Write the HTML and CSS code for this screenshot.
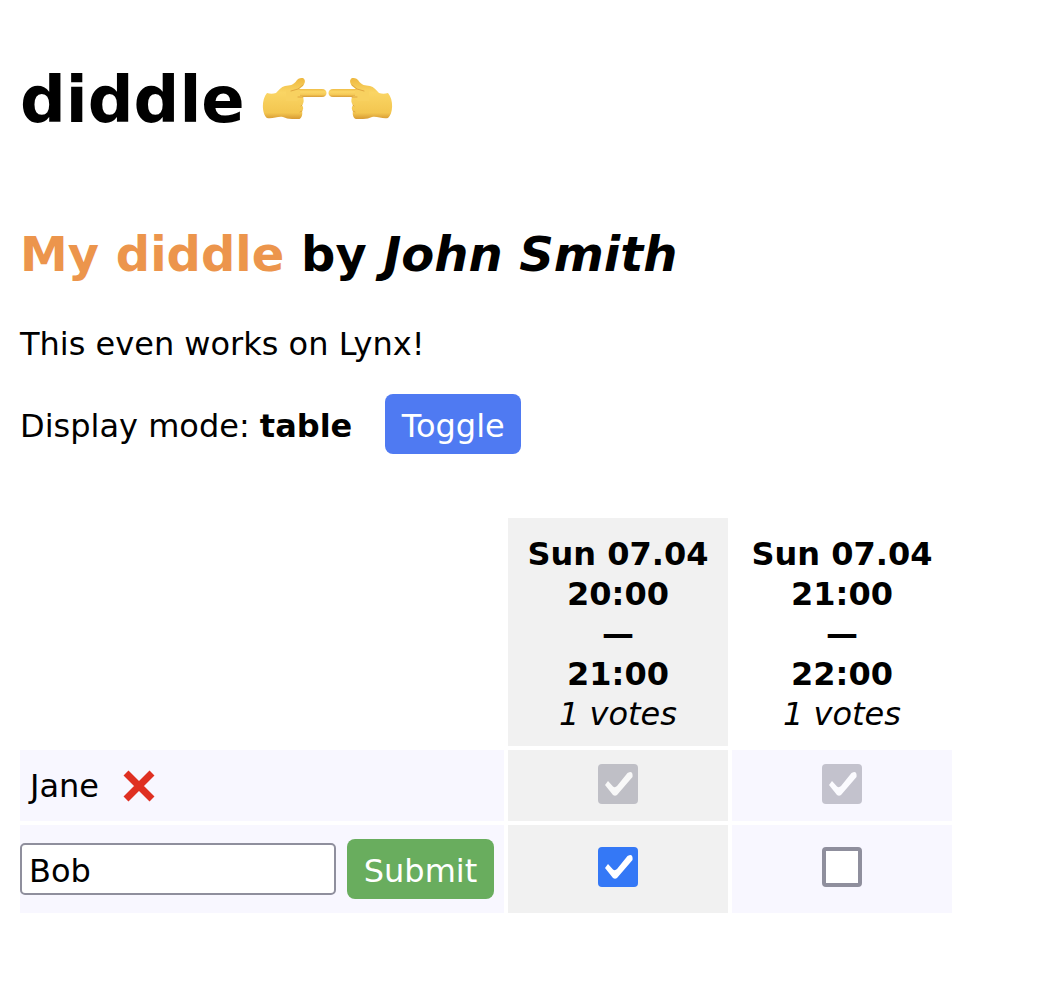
FILE: index.html
```
<!DOCTYPE html>
<html lang="en">
<head>
<meta charset="utf-8">
<title>diddle</title>
<link rel="stylesheet" href="styles.css">
</head>
<body>
<header class="site-header">
<h1 class="brand">diddle
<svg class="hands" viewBox="0 0 132 44" aria-hidden="true">
<defs>
<linearGradient id="skin" x1="0" y1="0" x2="0" y2="1"><stop offset="0" stop-color="#eeb840"/><stop offset=".35" stop-color="#fad564"/><stop offset=".85" stop-color="#f3c650"/><stop offset="1" stop-color="#d79a33"/></linearGradient>
<linearGradient id="finger" x1="0" y1="0" x2="0" y2="1"><stop offset="0" stop-color="#efbd48"/><stop offset=".35" stop-color="#fbd766"/><stop offset=".7" stop-color="#f5c957"/><stop offset="1" stop-color="#d79c38"/></linearGradient>
<g id="hand">
<path fill="url(#skin)" d="M5 15C8 16 11 16 14 15C17 12 19 9 23 8C28 7 31 8 35 2C37 0 39 0 41 0C44 2 43 5 41 8L36 12L41 19C42 22 42 25 40 27C42 30 41 32 40 33C41 37 39 41 37 41H30C26 41 24 40 21 39C16 38 11 41 5 40C0 36 -1 22 5 15Z"/>
<path fill="url(#finger)" d="M36 11H60C66 11 66 19 60 19H37Z"/>
<path fill="#f8d160" d="M24 13L38 12V18H41L35 23H24Z"/>
<path fill="none" stroke="#e0a740" stroke-linecap="round" d="M41 7L36 11L29 13M41 19H36M40 27L39 28M40 33L38 34"/>
</g>
</defs>
<use href="#hand"/><use href="#hand" transform="translate(131 0) scale(-1 1)"/>
</svg></h1>
</header>
<main>
<h2 class="title"><span class="event">My diddle</span> by <em>John Smith</em></h2>
<p class="description">This even works on Lynx!</p>
<form class="mode"><span class="mode-label">Display mode: <strong>table</strong></span><button class="button toggle" type="button">Toggle</button></form>
<form>
<table class="poll">
<thead><tr><td></td>
<th class="best" scope="col">Sun 07.04<br>20:00<br>—<br>21:00<br><em class="votes">1 votes</em></th>
<th scope="col">Sun 07.04<br>21:00<br>—<br>22:00<br><em class="votes">1 votes</em></th></tr></thead>
<tbody>
<tr class="saved"><td class="name"><div class="person">Jane <button class="remove" type="button" aria-label="Remove Jane"><svg viewBox="0 0 32 32" aria-hidden="true"><path d="M3 3L29 29M29 3L3 29"/></svg></button></div></td>
<td class="vote best"><input class="check" type="checkbox" aria-label="Jane, 20:00 to 21:00" checked disabled></td>
<td class="vote"><input class="check" type="checkbox" aria-label="Jane, 21:00 to 22:00" checked disabled></td></tr>
<tr class="entry"><td class="name"><div class="fields"><input class="name-input" type="text" value="Bob" aria-label="Name"><button class="button submit" type="submit">Submit</button></div></td>
<td class="vote best"><input class="check" type="checkbox" aria-label="20:00 to 21:00" checked></td>
<td class="vote"><input class="check" type="checkbox" aria-label="21:00 to 22:00"></td></tr>
</tbody>
</table>
</form>
</main>
</body>
</html>
```
FILE: styles.css
```
* { box-sizing: border-box; }
body {
  margin: 0;
  padding: 60px 20px;
  background: #fff;
  color: #000;
  font: 32px/40px Verdana, "DejaVu Sans", sans-serif;
}
.brand { display: flex; align-items: center; gap: 17px; margin: 0; font-size: 64px; line-height: 80px; }
.hands { width: 132px; height: 44px; }
.title { margin: 84px 0 0; font-size: 48px; line-height: 60px; }
.event { color: #ec954c; }
.description { margin: 40px 0 30px; }
.mode { display: flex; align-items: center; gap: 33px; margin-bottom: 60px; }
.mode-label { padding-top: 4px; }
.button { min-width: 136px; height: 60px; padding: 4px 16px 0; border: 0; border-radius: 8px; color: #fff; font: inherit; }
.toggle { background: #4f7af2; }
.submit { flex: 1; background: #69ad5e; }
.poll { border-collapse: separate; border-spacing: 4px; margin-left: -4px; }
.poll td, .poll th { padding: 0; text-align: center; }
.poll th { min-width: 220px; padding: 16px 0 12px; }
.votes { font-weight: normal; }
.poll tbody td { background: #f8f7ff; }
.poll .best, .poll tbody .best { background: #f1f1f1; }
.poll .name { min-width: 484px; text-align: left; }
.poll .vote { padding-bottom: 4px; }
.saved { height: 71px; }
.entry { height: 88px; }
.person { display: flex; align-items: center; gap: 24px; padding-left: 10px; }
.remove { display: flex; padding: 0; border: 0; background: none; }
.remove svg { width: 32px; height: 32px; fill: none; stroke: #df3022; stroke-width: 7; }
.fields { display: flex; align-items: center; gap: 11px; padding-right: 10px; }
.name-input { width: 316px; height: 52px; padding: 4px 7px 0; border: 2px solid #8f8f9d; border-radius: 5px; background: #fff; color: #000; font: inherit; }
.check { appearance: none; display: block; width: 40px; height: 40px; margin: 0 auto; border: 4px solid #8f8f9d; border-radius: 4px; background: #fff; }
.check:checked { border: 0; background: #3478f6 url("data:image/svg+xml,%3Csvg xmlns='http://www.w3.org/2000/svg' viewBox='0 0 40 40'%3E%3Cpath d='M7 21L10 17L15 22.5Q17 24 19 22L29.5 9Q31 8 33 8Q35 9 34.5 13L19 31Q17 32.5 15 31Z' fill='white'/%3E%3C/svg%3E") center / 40px; }
.check:disabled { background-color: #8f8f9d; opacity: .5; }
```
